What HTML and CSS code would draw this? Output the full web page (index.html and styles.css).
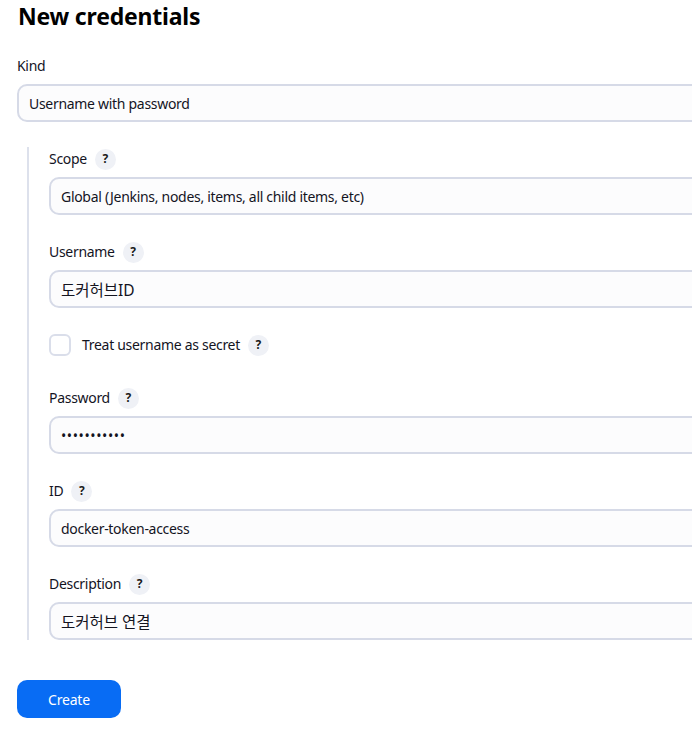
FILE: index.html
```html
<!DOCTYPE html>
<html lang="ko">
<head>
<meta charset="utf-8">
<title>New credentials</title>
<link rel="stylesheet" href="styles.css">
</head>
<body>
<main class="page">
  <h1 class="title">New credentials</h1>
  <div class="field">
    <label class="label">Kind</label>
    <select class="control select">
      <option>Username with password</option>
    </select>
  </div>
  <section class="nested">
    <div class="field">
      <div class="label-row"><label class="label">Scope</label><span class="help">?</span></div>
      <select class="control select">
        <option>Global (Jenkins, nodes, items, all child items, etc)</option>
      </select>
    </div>
    <div class="field">
      <div class="label-row"><label class="label">Username</label><span class="help">?</span></div>
      <input class="control ko" type="text" value="도커허브ID">
    </div>
    <div class="check-row">
      <span class="checkbox"></span>
      <span class="check-label">Treat username as secret</span>
      <span class="help">?</span>
    </div>
    <div class="field">
      <div class="label-row"><label class="label">Password</label><span class="help">?</span></div>
      <input class="control pw" type="password" value="abcdefghijk">
    </div>
    <div class="field">
      <div class="label-row"><label class="label">ID</label><span class="help">?</span></div>
      <input class="control" type="text" value="docker-token-access">
    </div>
    <div class="field">
      <div class="label-row"><label class="label">Description</label><span class="help">?</span></div>
      <input class="control ko" type="text" value="도커허브 연결">
    </div>
  </section>
  <button class="create" type="button">Create</button>
</main>
</body>
</html>
```
FILE: styles.css
```css
html, body {
  margin: 0;
  padding: 0;
  background: #ffffff;
  overflow: hidden;
}
body {
  font-family: "Noto Sans", "Noto Sans CJK KR", sans-serif;
  color: #14141f;
  font-size: 14px;
  letter-spacing: -0.3px;
}
.page {
  width: 780px;
  padding: 0 0 0 17px;
}
.title {
  margin: 0;
  padding: 0 0 0 1px;
  font-size: 23px;
  line-height: 32px;
  font-weight: 700;
  color: #000;
  letter-spacing: -0.2px;
}
.field {
  display: flex;
  flex-direction: column;
  gap: 8px;
}
.page > .field {
  margin-top: 24px;
}
.label {
  display: block;
  font-size: 14px;
  line-height: 20px;
}
.label-row {
  display: flex;
  align-items: center;
  gap: 8px;
  height: 20px;
}
.help {
  display: inline-flex;
  align-items: center;
  justify-content: center;
  width: 21px;
  height: 21px;
  border-radius: 50%;
  background: #eff1f6;
  font-size: 12px;
  font-weight: 700;
  color: #1a1a1a;
  line-height: 1;
  letter-spacing: 0;
}
.control {
  box-sizing: border-box;
  width: 100%;
  height: 38px;
  margin: 0;
  padding: 0 10px;
  border: 2px solid #d6dae7;
  border-radius: 10px;
  background: #fcfcfd;
  font-family: inherit;
  font-size: 14px;
  letter-spacing: -0.3px;
  color: #14141f;
  outline: none;
}
.control.ko {
  font-size: 15.5px;
  letter-spacing: 0;
}
.control.pw {
  letter-spacing: 0.6px;
  font-size: 14px;
}
.select {
  appearance: none;
  -webkit-appearance: none;
}
.nested {
  margin: 25px 0 0 10px;
  padding: 2px 0 0 20px;
  border-left: 2px solid #dde1ec;
  display: flex;
  flex-direction: column;
  gap: 27px;
}
.check-row {
  display: flex;
  align-items: center;
  height: 22px;
  margin: -1px 0 5px;
}
.checkbox {
  box-sizing: border-box;
  width: 22px;
  height: 22px;
  border: 2px solid #dadeea;
  border-radius: 6px;
  background: #fff;
  margin-right: 11px;
}
.check-label {
  margin-right: 8px;
  line-height: 20px;
}
.create {
  margin-top: 40px;
  width: 104px;
  height: 38px;
  border: none;
  border-radius: 10px;
  background: #086cf4;
  color: #fff;
  font-family: inherit;
  font-size: 14px;
  letter-spacing: -0.2px;
  cursor: pointer;
}
```
